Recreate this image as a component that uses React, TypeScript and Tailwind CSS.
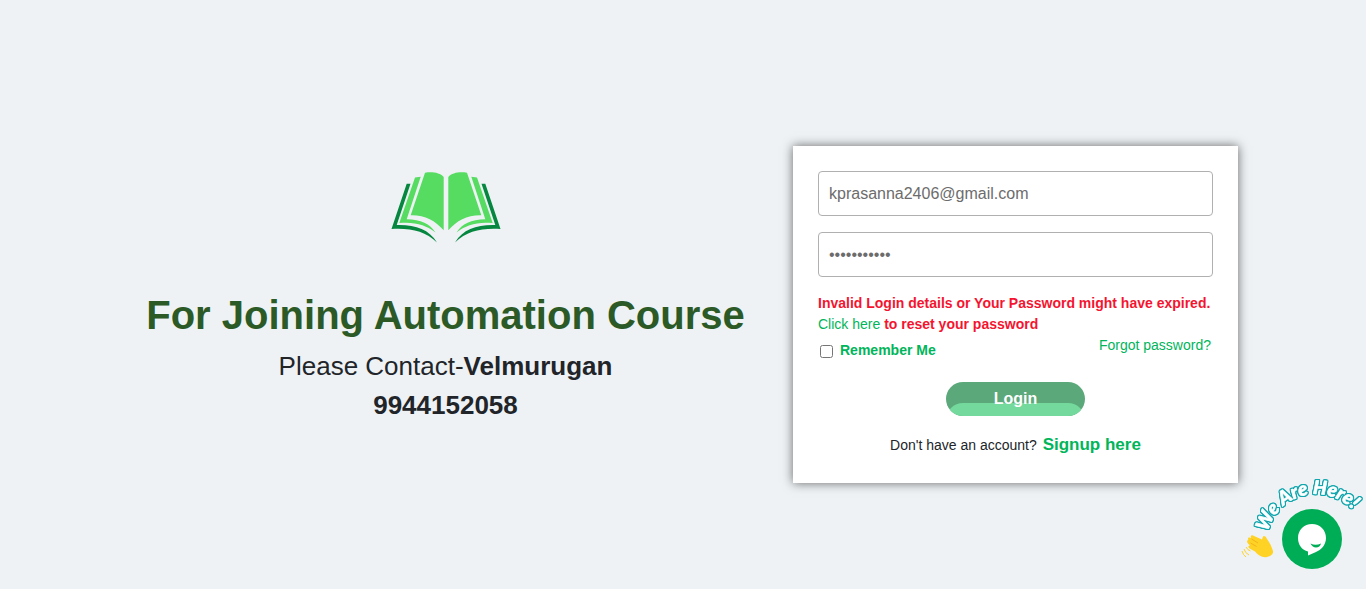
import { useState } from "react";

function BookLogo() {
  return (
    <svg width="110" height="72" viewBox="0 0 110 72" aria-hidden="true">
      <g id="page">
        <path d="M34 0.700 C41 -0.500 49 0.500 52.700 5 V58.300 C44 48.500 34 43 19.700 43.300 Z" fill="#57dc62" />
        <path d="M29.700 4.700 L24 5.500 L8.300 51 C24 49.500 35 53 44.500 60.500 C39 52 30 47.500 15.700 47.300 Z" fill="#57dc62" />
        <path d="M19.500 11.700 H15.700 L0.500 57 C20 56 34 59 46 70.500 C38 57 24 52.500 5.700 53 Z" fill="#05873f" />
      </g>
      <use href="#page" transform="translate(110 0) scale(-1 1)" />
    </svg>
  );
}

function ChatWidget() {
  return (
    <button type="button" aria-label="Open chat" className="absolute right-0 bottom-0 cursor-pointer">
      <svg width="126" height="119" viewBox="0 0 126 119">
        <defs>
          <path id="greeting-arc" d="M28 62 C34 38 54 24 76 24 C91 24 105 31 115 42 L124 53" />
        </defs>
        <text
          className="font-['Lato','Liberation_Sans',sans-serif] text-[19px] font-black italic [filter:drop-shadow(1px_0_0_#11a5ad)_drop-shadow(-1px_0_0_#11a5ad)_drop-shadow(0_1px_0_#11a5ad)_drop-shadow(0_-1px_0_#11a5ad)]"
          fill="#fff"
          stroke="#fff"
          strokeWidth="0.6"
          strokeLinejoin="round"
        >
          <textPath href="#greeting-arc">We Are Here!</textPath>
        </text>
        <circle cx="72" cy="69" r="30" fill="#00ad57" />
        <path
          d="M72 54 C80 54 86 60 86 68 C86 75 81 80 76 82 L68 85.500 L68 81.500 C62 80 58 75 58 68 C58 60 64 54 72 54 Z"
          fill="#fff"
        />
        <path d="M70.500 73.500 Q75.500 76 81 73.500 Q80 77.500 76 77.500 Q72.500 77.500 70.500 73.500 Z" fill="#00ad57" />
        <path
          d="M8.500 70 C7 68 9 66.500 11 68 C10 65.500 12 64.500 14 66 L22 69.500 L23 66.500 C24 65 26 66.500 27 69 L29 72 C31 75 32 78 33 81 C33.500 84 31 86 27 87 C22 88 18 85 15 81.500 L9.500 78.500 C7.500 77 8.500 75.500 10 75.500 L8 73.500 C6.500 72 7 70 8.500 70 Z"
          fill="#ffd226"
        />
        <path d="M11.500 69 L18 73 M10.500 73 L16.500 76.500" stroke="#edac15" strokeWidth="0.8" fill="none" />
        <path d="M6 77 Q7.500 80 10.500 81 M4 79 Q5 83 9 85 M2 81 Q3 85 6 87" stroke="#ffd226" strokeWidth="1" fill="none" />
      </svg>
    </button>
  );
}

const fieldClass =
  "block h-[45px] w-full rounded border border-[#b0b0b0] bg-white px-2.5 text-base text-[#6c6c6c] outline-none focus:border-[#00b55a]";

export default function App() {
  const [email, setEmail] = useState("kprasanna2406@gmail.com");
  const [password, setPassword] = useState("automation1");

  return (
    <div className="relative flex min-h-screen flex-col items-center bg-[#eef2f5] font-['Liberation_Sans',Arial,sans-serif] text-[#212529]">
      <main className="grid w-full max-w-[1140px] grid-cols-1 pt-[146px] pb-24 lg:grid-cols-[7fr_5fr]">
        <section className="flex flex-col items-center px-4 pt-[26px] text-center">
          <BookLogo />
          <h1 className="mt-10 text-[40px] leading-[63px] font-bold text-[#2c5a26]">For Joining Automation Course</h1>
          <p className="text-[26px] leading-[39px]">
            Please Contact-<strong>Velmurugan</strong>
            <br />
            <strong>9944152058</strong>
          </p>
        </section>

        <section className="px-[15px]">
          <form
            onSubmit={(event) => event.preventDefault()}
            className="bg-white p-[25px] text-sm leading-[21px] shadow-[0_0_10px_#666]"
          >
            <input
              type="email"
              aria-label="Email"
              value={email}
              onChange={(event) => setEmail(event.target.value)}
              className={fieldClass}
            />
            <input
              type="password"
              aria-label="Password"
              value={password}
              onChange={(event) => setPassword(event.target.value)}
              className={`mt-4 ${fieldClass}`}
            />
            <p role="alert" className="mt-4 font-bold text-[#f5142f]">
              Invalid Login details or Your Password might have expired.{" "}
              <a href="#reset" className="font-normal text-[#00b55a]">
                Click here
              </a>{" "}
              to reset your password
            </p>
            <div className="flex items-start justify-between pr-0.5">
              <label className="flex items-center pt-[5px] font-bold text-[#00b55a]">
                <input type="checkbox" className="mt-0.5 mr-[7px] ml-0.5 size-[13px]" />
                Remember Me
              </label>
              <a href="#forgot" className="text-[#00b55a]">
                Forgot password?
              </a>
            </div>
            <button
              type="submit"
              className="relative mx-auto mt-[21px] block h-[34px] w-[139px] cursor-pointer overflow-hidden rounded-full bg-[#5ba87a] text-base leading-[34px] font-bold text-white"
            >
              <span className="absolute inset-x-0 top-[21px] h-[34px] rounded-full bg-[#74d99c]" />
              <span className="relative">Login</span>
            </button>
            <p className="mt-4 text-center leading-[25px]">
              Don't have an account?{" "}
              <a href="#signup" className="ml-0.5 text-[17px] font-bold text-[#00b55a]">
                Signup here
              </a>
            </p>
          </form>
        </section>
      </main>
      <ChatWidget />
    </div>
  );
}
